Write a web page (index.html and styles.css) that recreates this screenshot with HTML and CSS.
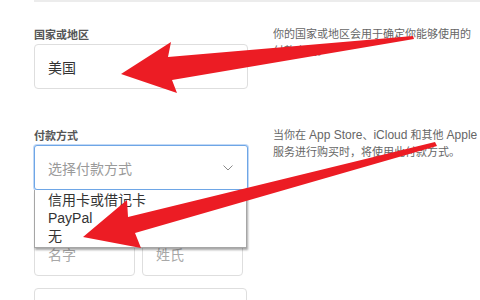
FILE: index.html
```
<!DOCTYPE html>
<html lang="zh-CN">
<head>
<meta charset="utf-8">
<title>付款方式</title>
<link rel="stylesheet" href="styles.css">
</head>
<body>
<div class="page">
  <div class="topline"></div>
  <div class="row row-country">
    <div class="field">
      <div class="label">国家或地区</div>
      <div class="box">
        <span class="value">美国</span>
        <svg class="chev" width="10" height="6" viewBox="0 0 10 6"><polyline points="0.5,0.5 5,5 9.5,0.5" fill="none" stroke="#8a8a8a" stroke-width="1"/></svg>
      </div>
    </div>
    <div class="note">你的国家或地区会用于确定你能够使用的<br>付款方式。</div>
  </div>
  <div class="row row-pay">
    <div class="field">
      <div class="label">付款方式</div>
      <div class="select-wrap">
        <div class="box focus">
          <span class="placeholder">选择付款方式</span>
          <svg class="chev" width="10" height="6" viewBox="0 0 10 6"><polyline points="0.5,0.5 5,5 9.5,0.5" fill="none" stroke="#8a8a8a" stroke-width="1"/></svg>
        </div>
        <ul class="menu">
          <li>信用卡或借记卡</li>
          <li>PayPal</li>
          <li>无</li>
        </ul>
      </div>
    </div>
    <div class="note">当你在 <span class="latin">App Store</span>、<span class="latin">iCloud</span> 和其他 <span class="latin">Apple</span><br>服务进行购买时，将使用此付款方式。</div>
  </div>
  <div class="names">
    <div class="box small"><span class="placeholder light">名字</span></div>
    <div class="box small"><span class="placeholder light">姓氏</span></div>
  </div>
  <div class="box wide-next"></div>
</div>
<svg class="arrows" width="480" height="300" viewBox="0 0 480 300">
  <polygon fill="#ec1c24" points="413,36 168,57 171,42 121,74 177,93 172,80 414,39"/>
  <polygon fill="#ec1c24" points="435,142 128,217 127,200 83,237 141,248 135,233 437,146"/>
</svg>
</body>
</html>
```
FILE: styles.css
```
html, body {
  margin: 0;
  padding: 0;
  background: #ffffff;
  overflow: hidden;
  width: 480px;
  height: 300px;
}
body {
  position: relative;
  font-family: "Liberation Sans", "Noto Sans CJK SC", sans-serif;
  color: #333333;
}
.page {
  padding-left: 34px;
  height: 300px;
  overflow: hidden;
}
.topline {
  height: 2px;
  background: #ececec;
}
.row {
  display: grid;
  grid-template-columns: 214px 1fr;
  column-gap: 25px;
  align-items: start;
}
.row-country {
  margin-top: 26px;
}
.row-pay {
  margin-top: 40px;
}
.label {
  font-size: 11px;
  line-height: 14px;
  height: 14px;
  color: #555555;
  font-weight: bold;
  margin-bottom: 2px;
}
.box {
  box-sizing: border-box;
  height: 45px;
  border: 1px solid #dedede;
  border-radius: 4px;
  display: flex;
  align-items: center;
  justify-content: space-between;
  padding: 0 14px 0 13px;
  background: #ffffff;
}
.value {
  font-size: 14px;
  color: #333333;
}
.placeholder {
  font-size: 14px;
  color: #9a9a9a;
}
.placeholder.light {
  color: #a8a8a8;
}
.chev {
  display: block;
}
.focus {
  border-color: #6ea6e6;
  box-shadow: 0 0 0 1px rgba(120, 170, 235, 0.45);
  border-radius: 3px;
}
.select-wrap {
  position: relative;
}
.menu {
  position: absolute;
  top: 100%;
  left: 0;
  width: 213px;
  box-sizing: border-box;
  margin: 0;
  padding: 1px 0 2px 0;
  list-style: none;
  background: #ffffff;
  border: 1px solid #a6a6a6;
  border-top: none;
  box-shadow: 1px 2px 2px rgba(0, 0, 0, 0.35);
  z-index: 2;
}
.menu li {
  font-size: 14px;
  line-height: 18px;
  height: 18px;
  padding-left: 13px;
  color: #333333;
}
.note {
  font-size: 11px;
  line-height: 17px;
  color: #666666;
  white-space: nowrap;
  overflow: hidden;
  margin-top: -2px;
}
.note .latin {
  font-size: 12px;
}
.names {
  display: flex;
  gap: 7px;
  margin-top: 41px;
}
.box.small {
  width: 101px;
}
.wide-next {
  margin-top: 12px;
  width: 213px;
}
.arrows {
  position: absolute;
  top: 0;
  left: 0;
  z-index: 5;
  pointer-events: none;
}
```
